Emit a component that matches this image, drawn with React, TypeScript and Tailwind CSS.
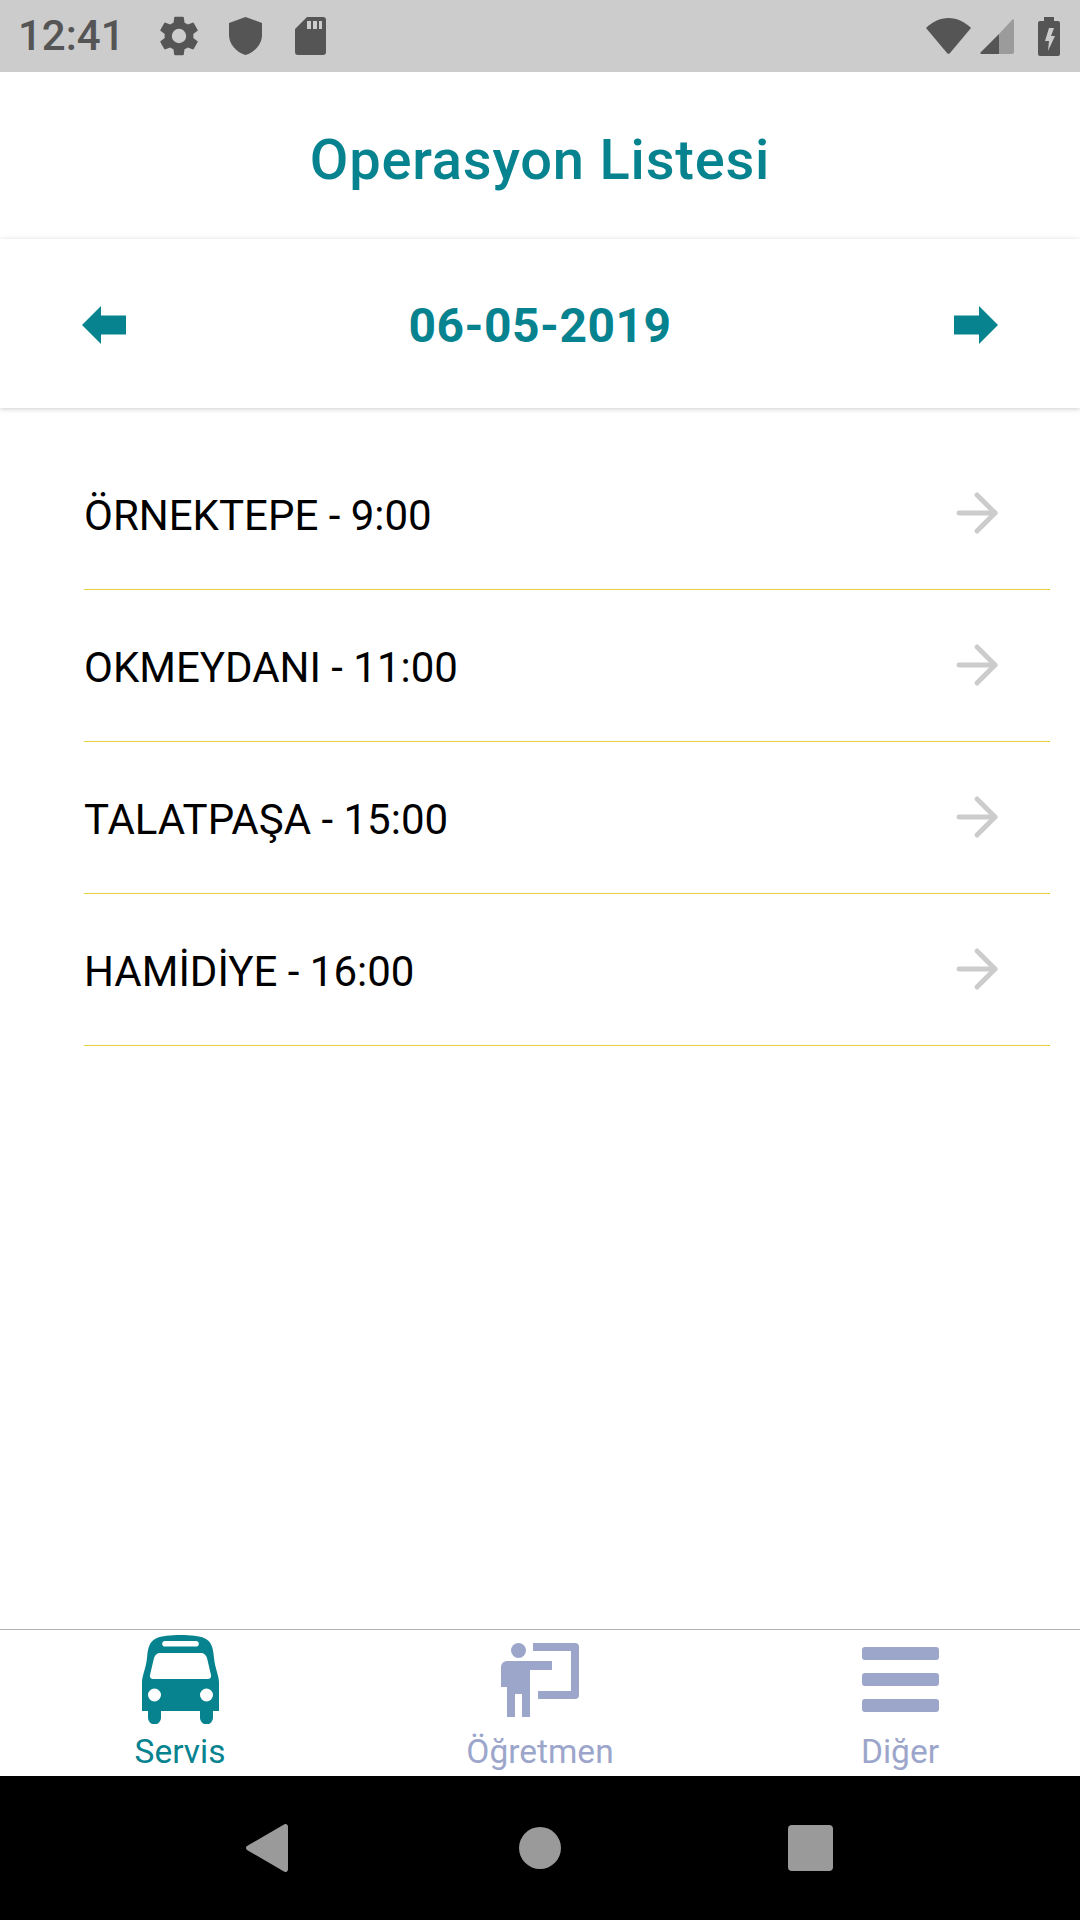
import { ArrowRight } from 'lucide-react';
import type { ReactNode } from 'react';

const stops = ['ÖRNEKTEPE - 9:00', 'OKMEYDANI - 11:00', 'TALATPAŞA - 15:00', 'HAMİDİYE - 16:00'];

function StatusBar() {
  return (
    <div className="h-[72px] bg-[#cccccc] flex items-center pl-[18px] pr-[20px] text-[#555555]">
      <span className="text-[42px] leading-none font-medium w-[137px]">12:41</span>
      <svg className="w-[48px] h-[48px] mr-[26px]" viewBox="0 0 24 24" fill="currentColor">
        <path d="M19.14 12.94c.04-.3.06-.61.06-.94s-.02-.64-.07-.94l2.03-1.58a.5.5 0 0 0 .12-.61l-1.92-3.32a.5.5 0 0 0-.59-.22l-2.39.96a7 7 0 0 0-1.62-.94l-.36-2.54a.48.48 0 0 0-.48-.41h-3.84a.47.47 0 0 0-.47.41l-.36 2.54a7.2 7.2 0 0 0-1.62.94l-2.39-.96a.48.48 0 0 0-.59.22L2.74 8.87a.47.47 0 0 0 .12.61l2.03 1.58c-.05.3-.09.63-.09.94s.02.64.07.94l-2.03 1.58a.5.5 0 0 0-.12.61l1.92 3.32c.12.22.37.29.59.22l2.39-.96c.5.38 1.03.7 1.62.94l.36 2.54c.05.24.24.41.48.41h3.84c.24 0 .44-.17.47-.41l.36-2.54a7 7 0 0 0 1.62-.94l2.39.96c.22.08.47 0 .59-.22l1.92-3.32a.46.46 0 0 0-.12-.61zM12 15.6a3.6 3.6 0 1 1 0-7.2 3.6 3.6 0 0 1 0 7.2z" />
      </svg>
      <svg className="w-[33px] h-[38px] mr-[33px]" viewBox="0 0 33 38" fill="currentColor">
        <path d="M16.500 0 33 6v12c0 9-7 17-16.500 20C7 35 0 27 0 18V6z" />
      </svg>
      <svg className="w-[31px] h-[38px]" viewBox="0 0 31 38" fill="currentColor">
        <path fillRule="evenodd" d="M12 0h16a3 3 0 0 1 3 3v32a3 3 0 0 1-3 3H3a3 3 0 0 1-3-3V12zM12 4v8h4V4zm6 0v8h4V4zm6 0v8h3V4z" />
      </svg>
      <div className="flex-1" />
      <svg className="w-[45px] h-[36px] mr-[9px]" viewBox="0 0 45 36" fill="currentColor">
        <path d="M0 10C6 4 14 0 22.500 0S39 4 45 10L24 35a2 2 0 0 1-3 0z" />
      </svg>
      <svg className="w-[34px] h-[35px] mr-[24px] mt-[1px]" viewBox="0 0 34 35">
        <path d="M34 2v31a2 2 0 0 1-2 2H19V15L32 1a1 1 0 0 1 2 1z" fill="#9b9b9b" />
        <path d="M19 15v20H2a1 1 0 0 1-1-2z" fill="currentColor" />
      </svg>
      <svg className="w-[22px] h-[39px]" viewBox="0 0 22 39" fill="currentColor">
        <path fillRule="evenodd" d="M6 0h10v4h4a2 2 0 0 1 2 2v31a2 2 0 0 1-2 2H2a2 2 0 0 1-2-2V6a2 2 0 0 1 2-2h4zM11 11 7 24h4l-1 10 7-15h-4l3-8z" />
      </svg>
    </div>
  );
}

function BlockArrow({ flip }: { flip?: boolean }) {
  return (
    <svg className={flip ? 'w-[44px] h-[38px] -scale-x-100' : 'w-[44px] h-[38px]'} viewBox="0 0 44 38" fill="#06838f">
      <path d="M0 9.500h25V0l19 19-19 19v-9.500H0z" />
    </svg>
  );
}

function BusIcon() {
  return (
    <svg className="w-[77px] h-[90px] mt-[4px]" viewBox="0 0 77 90" fill="#06838f">
      <path fillRule="evenodd" d="M0 77V48C0 42 4 34 5 24 6 12 8 7 15 4 23 0 54 0 62 4c7 3 9 8 10 20 1 10 5 18 5 24v29h-6v7a6.500 6.500 0 0 1-13 0v-7H19v7a6.500 6.500 0 0 1-13 0v-7zM23 7a2.800 2.800 0 0 0 0 5.600h31A2.800 2.800 0 0 0 54 7zM18 19c-3 0-5 2-6 5L8 41c-.5 3 1 4 3 4h55c2 0 3.500-1 3-4l-4-17c-1-3-3-5-6-5zM12.500 67.500a6.500 6.500 0 1 0 0-13 6.500 6.500 0 0 0 0 13zm52 0a6.500 6.500 0 1 0 0-13 6.500 6.500 0 0 0 0 13z" />
    </svg>
  );
}

function TeacherIcon() {
  return (
    <svg className="w-[78px] h-[74px] mt-[13px]" viewBox="0 0 78 74" fill="#9ca6cb">
      <circle cx="17.500" cy="7.500" r="7.500" />
      <path d="M6 18h45v9H29v47h-8V51h-7v23H6V44H0V24a6 6 0 0 1 6-6z" />
      <path d="M32 0h42a4 4 0 0 1 4 4v48a4 4 0 0 1-4 4H37v-8h33V8H32z" />
    </svg>
  );
}

function MenuIcon() {
  return (
    <div className="w-[77px] flex flex-col gap-[13px] mt-[17px]">
      <div className="h-[13px] rounded-[3px] bg-[#9ca6cb]" />
      <div className="h-[13px] rounded-[3px] bg-[#9ca6cb]" />
      <div className="h-[13px] rounded-[3px] bg-[#9ca6cb]" />
    </div>
  );
}

function Tab({ label, color, children }: { label: string; color: string; children: ReactNode }) {
  return (
    <div className="w-[360px] flex flex-col items-center">
      <div className="h-[94px] flex items-start justify-center">{children}</div>
      <span className="mt-[8px] text-[33.5px] leading-[40px]" style={{ color }}>{label}</span>
    </div>
  );
}

export default function App() {
  return (
    <div className="w-[1080px] h-[1920px] bg-white flex flex-col font-['Roboto',sans-serif] overflow-hidden">
      <StatusBar />

      <div className="h-[167px] pt-[8px] flex items-center justify-center">
        <h1 className="text-[56px] font-medium text-[#06838f] tracking-[0.8px]">Operasyon Listesi</h1>
      </div>

      <div className="h-[169px] pt-[2px] shadow-[0_1px_5px_rgba(0,0,0,0.2)] flex items-center justify-between px-[82px]">
        <BlockArrow flip />
        <span className="text-[48px] mt-[3px] font-bold text-[#06838f] tracking-[0.5px]">06-05-2019</span>
        <BlockArrow />
      </div>

      <div className="pl-[84px] pr-[30px] pt-[30px] flex-1">
        {stops.map(stop => (
          <div key={stop} className="h-[152px] border-b border-[#e6d23c] flex items-center justify-between pr-[42px] pt-[2px]">
            <span className="text-[42px] mt-[2px] text-black">{stop}</span>
            <ArrowRight className="w-[62px] h-[62px] mb-[3px] text-[#cccccc]" strokeWidth={1.9} />
          </div>
        ))}
      </div>

      <div className="h-[147px] border-t border-[#b0b0b0] flex">
        <Tab label="Servis" color="#06838f"><BusIcon /></Tab>
        <Tab label="Öğretmen" color="#9ca6cb"><TeacherIcon /></Tab>
        <Tab label="Diğer" color="#9ca6cb"><MenuIcon /></Tab>
      </div>

      <div className="h-[144px] bg-black flex items-start pl-[246px] pt-[48px]">
        <svg className="w-[42px] h-[48px]" viewBox="0 0 42 48" fill="#9a9a9a">
          <path d="M38 0.500a2.500 2.500 0 0 1 4 2v43a2.500 2.500 0 0 1-4 2L1 26a2.500 2.500 0 0 1 0-4z" />
        </svg>
        <div className="w-[42px] h-[42px] ml-[231px] mt-[3px] rounded-full bg-[#9a9a9a]" />
        <div className="w-[45px] h-[46px] ml-[227px] mt-[1px] rounded-[4px] bg-[#9a9a9a]" />
      </div>
    </div>
  );
}
